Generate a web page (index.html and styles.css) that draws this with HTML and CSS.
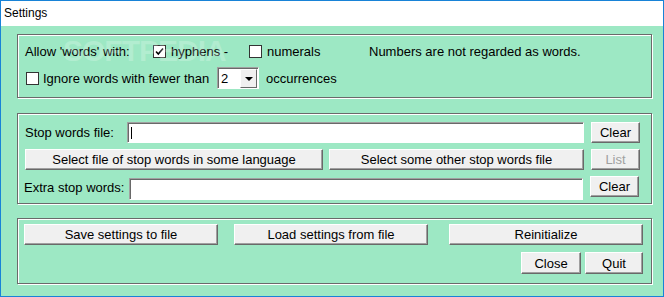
FILE: index.html
```html
<!DOCTYPE html>
<html>
<head>
    <title>Settings</title>
    <link rel="stylesheet" href="styles.css">
</head>
<body>
    <div class="window">
        <div class="titlebar">Settings</div>

        <div class="client">
            <section class="group group-allow">
                <div class="row row-allow">
                    <span class="label-allow">Allow 'words' with:</span>
                    <span class="check check-hyphens">
                        <span class="box">
                            <svg width="11" height="11" viewBox="0 0 11 11"><path d="M2 5.5 L4.3 8 L9 2.5" fill="none" stroke="#000" stroke-width="1.6"/></svg>
                        </span>
                        hyphens -
                    </span>
                    <span class="check check-numerals"><span class="box"></span>numerals</span>
                    <span class="note">Numbers are not regarded as words.</span>
                </div>
                <div class="row row-ignore">
                    <span class="check check-ignore"><span class="box"></span>Ignore words with fewer than</span>
                    <span class="combo">
                        <span class="combo-value">2</span>
                        <span class="combo-arrow"></span>
                    </span>
                    <span class="occ">occurrences</span>
                </div>
            </section>

            <section class="group group-stop">
                <div class="row row-file">
                    <span class="label-file">Stop words file:</span>
                    <div class="field field-file"><span class="caret"></span></div>
                    <button class="btn btn-side">Clear</button>
                </div>
                <div class="row row-select">
                    <button class="btn btn-lang">Select file of stop words in some language</button>
                    <button class="btn btn-other">Select some other stop words file</button>
                    <button class="btn btn-side" disabled>List</button>
                </div>
                <div class="row row-extra">
                    <span class="label-extra">Extra stop words:</span>
                    <div class="field field-extra"></div>
                    <button class="btn btn-side">Clear</button>
                </div>
            </section>

            <section class="group group-actions">
                <div class="row row-actions">
                    <button class="btn btn-wide">Save settings to file</button>
                    <button class="btn btn-wide btn-load">Load settings from file</button>
                    <button class="btn btn-wide btn-reinit">Reinitialize</button>
                </div>
                <div class="row row-close">
                    <button class="btn btn-close">Close</button>
                    <button class="btn btn-quit">Quit</button>
                </div>
            </section>
        </div>

        <div class="watermark">SOFTPEDIA</div>
    </div>
</body>
</html>
```

FILE: styles.css
```css
body {
    margin: 0;
    padding: 0;
    font-family: "Liberation Sans", Arial, sans-serif;
    font-size: 13px;
    color: #000;
    background-color: #fff;
}

.window {
    position: relative;
    width: 664px;
    height: 297px;
    box-sizing: border-box;
    border: 1px solid #1883d7;
    display: flex;
    flex-direction: column;
    overflow: hidden;
}

.titlebar {
    height: 25px;
    line-height: 24px;
    padding-left: 3px;
    font-size: 12px;
    background-color: #fff;
}

.client {
    flex: 1;
    background-color: #9de8c4;
    padding: 8px 11px 0 16px;
    display: flex;
    flex-direction: column;
}

.group {
    box-sizing: border-box;
    width: 635px;
    border: 1px solid #6a6a6a;
    box-shadow: inset 1px 1px 0 #fff, 1px 1px 0 #fff;
}

.row {
    display: flex;
    align-items: center;
}

/* first group */
.group-allow {
    height: 64px;
    padding: 6px 7px 0;
}

.row-allow {
    height: 20px;
}

.label-allow {
    width: 128px;
}

.check {
    display: flex;
    align-items: center;
}

.box {
    box-sizing: border-box;
    width: 13px;
    height: 13px;
    border: 1px solid #333;
    background-color: #fff;
    margin-right: 5px;
    display: flex;
    align-items: center;
    justify-content: center;
}

.check-hyphens {
    width: 96px;
}

.check-numerals {
    width: 120px;
}

.row-ignore {
    height: 22px;
    margin-top: 6px;
}

.check-ignore {
    width: 191px;
    margin-left: 1px;
}

.check-ignore .box {
    margin-right: 4px;
}

.combo {
    box-sizing: border-box;
    width: 42px;
    height: 22px;
    display: flex;
    align-items: center;
    background-color: #fff;
    border: 1px solid;
    border-color: #a0a0a0 #fff #fff #a0a0a0;
    box-shadow: inset 1px 1px 0 #696969;
}

.combo-value {
    flex: 1;
    padding-left: 3px;
}

.combo-arrow {
    position: relative;
    box-sizing: border-box;
    width: 17px;
    height: 19px;
    margin-right: 1px;
    background-color: #f0f0f0;
    border: 1px solid;
    border-color: #fff #696969 #696969 #fff;
}

.combo-arrow::after {
    content: "";
    position: absolute;
    left: 4px;
    top: 7px;
    border-left: 4px solid transparent;
    border-right: 4px solid transparent;
    border-top: 4px solid #000;
}

.occ {
    margin-left: 7px;
}

/* stop words group */
.group-stop {
    height: 91px;
    margin-top: 15px;
    padding: 8px 11px 0 7px;
}

.row-file,
.row-select,
.row-extra {
    height: 21px;
}

.row-select,
.row-extra {
    margin-top: 6px;
}

.row-extra {
    align-items: flex-start;
}

.label-file {
    width: 102px;
}

.label-extra {
    width: 105px;
    margin-left: -1px;
    line-height: 22px;
    margin-top: 1px;
}

.field {
    position: relative;
    box-sizing: border-box;
    height: 21px;
    background-color: #fff;
    border: 1px solid;
    border-color: #a0a0a0 #fff #fff #a0a0a0;
    box-shadow: inset 1px 1px 0 #696969;
}

.field-file {
    width: 457px;
}

.field-extra {
    width: 454px;
    height: 22px;
    margin-top: 2px;
}

.caret {
    position: absolute;
    left: 3px;
    top: 4px;
    width: 1px;
    height: 12px;
    background-color: #000;
}

.btn {
    box-sizing: border-box;
    height: 21px;
    padding: 0;
    font-family: "Liberation Sans", Arial, sans-serif;
    font-size: 13px;
    color: #000;
    background-color: #f0f0f0;
    border: 1px solid;
    border-color: #fff #696969 #696969 #fff;
    box-shadow: inset -1px -1px 0 #a0a0a0;
}

.btn:disabled {
    color: #a0a0a0;
}

.btn-side {
    width: 49px;
    margin-left: 7px;
}

.btn-lang {
    width: 298px;
}

.btn-other {
    width: 255px;
    margin-left: 6px;
}

/* actions group */
.group-actions {
    height: 66px;
    margin-top: 14px;
    padding: 5px 8px 0 6px;
}

.btn-wide {
    width: 194px;
}

.btn-load {
    margin-left: 16px;
}

.btn-reinit {
    margin-left: 21px;
}

.row-close {
    justify-content: flex-end;
    margin-top: 7px;
}

.btn-close {
    width: 60px;
    height: 22px;
}

.btn-quit {
    width: 58px;
    height: 22px;
    margin-left: 4px;
}

.watermark {
    position: absolute;
    left: 62px;
    top: 33px;
    font-size: 30px;
    font-weight: bold;
    letter-spacing: -1px;
    color: rgba(255, 255, 255, 0.22);
    pointer-events: none;
}
```
